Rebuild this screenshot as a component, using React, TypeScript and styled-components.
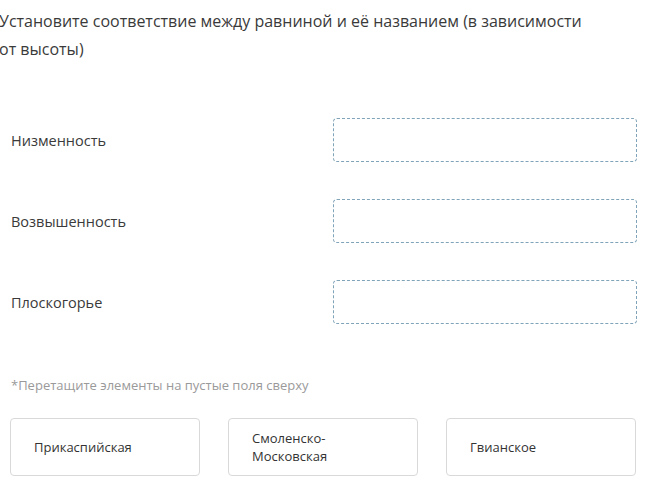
import styled, { createGlobalStyle } from 'styled-components';

const GlobalStyle = createGlobalStyle`
  body {
    margin: 0;
    background: #ffffff;
    font-family: 'Open Sans', 'Noto Sans', sans-serif;
    color: #333333;
  }
`;

const rows = ['Низменность', 'Возвышенность', 'Плоскогорье'];

const options = ['Прикаспийская', 'Смоленско-\nМосковская', 'Гвианское'];

export default function App() {
  return (
    <>
      <GlobalStyle />
      <Task>
        <Question>
          Установите соответствие между равниной и её названием (в зависимости
          от высоты)
        </Question>
        <Rows>
          {rows.map((label) => (
            <Row key={label}>
              <Label>{label}</Label>
              <DropZone />
            </Row>
          ))}
        </Rows>
        <Hint>*Перетащите элементы на пустые поля сверху</Hint>
        <Options>
          {options.map((text) => (
            <OptionCard key={text}>{text}</OptionCard>
          ))}
        </Options>
      </Task>
    </>
  );
}

const Task = styled.div`
  width: 653px;
  padding: 7px 16px 0 0;
  box-sizing: border-box;
`;

const Question = styled.div`
  max-width: 596px;
  font-size: 16px;
  line-height: 28px;
  color: #3a3a3a;
  margin-left: -1px;
`;

const Rows = styled.div`
  margin-top: 55px;
  display: flex;
  flex-direction: column;
  gap: 37px;
`;

const Row = styled.div`
  display: flex;
  align-items: center;
  justify-content: space-between;
  padding-left: 11px;
`;

const Label = styled.div`
  font-size: 14.5px;
  color: #3a3a3a;
`;

const DropZone = styled.div`
  width: 304px;
  height: 44px;
  box-sizing: border-box;
  border: 1px dashed #7fa3b8;
  border-radius: 4px;
`;

const Hint = styled.div`
  margin-top: 52px;
  padding-left: 11px;
  font-size: 13px;
  color: #9a9a9a;
`;

const Options = styled.div`
  margin-top: 24px;
  padding-left: 10px;
  display: flex;
  gap: 28px;
`;

const OptionCard = styled.div`
  width: 190px;
  height: 58px;
  box-sizing: border-box;
  border: 1px solid #d9d9d9;
  border-radius: 4px;
  padding: 0 20px 0 23px;
  display: flex;
  align-items: center;
  white-space: pre-line;
  font-size: 13px;
  line-height: 18px;
  color: #333333;
`;
